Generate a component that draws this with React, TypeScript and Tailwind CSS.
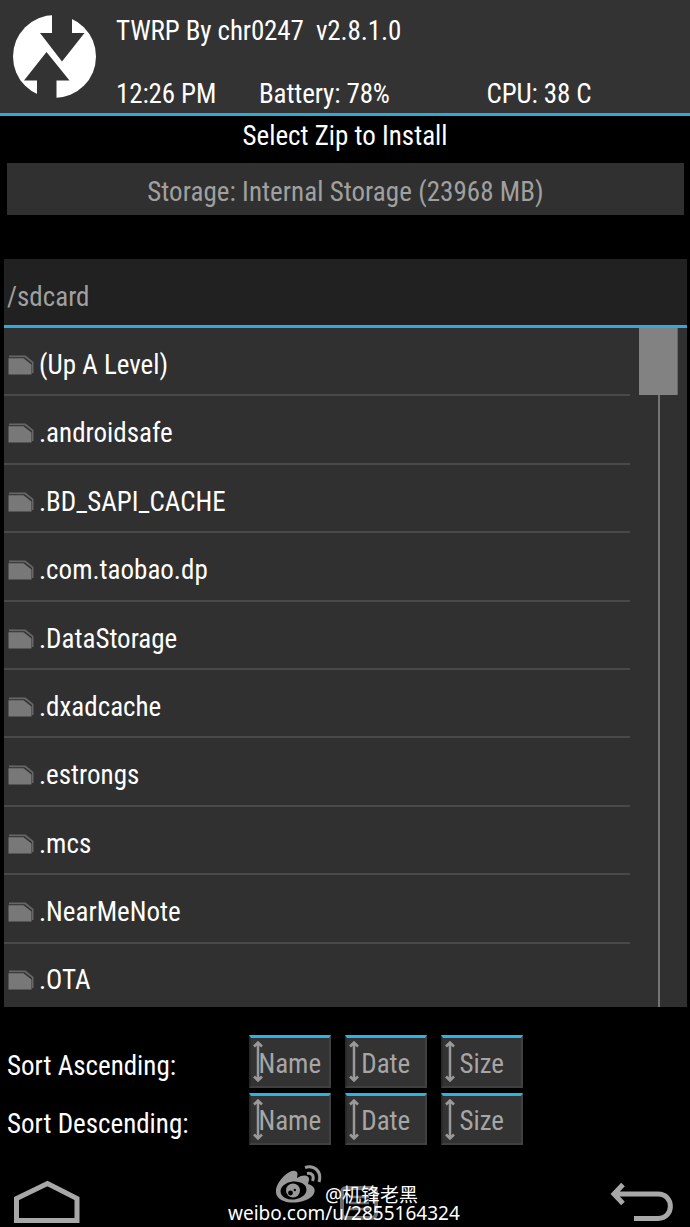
const FILES = [
  '(Up A Level)',
  '.androidsafe',
  '.BD_SAPI_CACHE',
  '.com.taobao.dp',
  '.DataStorage',
  '.dxadcache',
  '.estrongs',
  '.mcs',
  '.NearMeNote',
  '.OTA',
];

const SORT_KEYS = ['Name', 'Date', 'Size'];

function TwrpLogo() {
  return (
    <svg className="h-[84px] w-[84px]" viewBox="0 0 84 84">
      <circle cx="41.5" cy="41.5" r="41.5" fill="#fff" />
      <path d="M39 -1V18H27L49 46.500L71.500 18H59V-1Z" fill="#333" />
      <path d="M33.500 37L11 65.500H24V84H43.500V65.500H56.500Z" fill="#333" />
    </svg>
  );
}

function FolderIcon() {
  return (
    <svg className="h-5 w-[26px] shrink-0" viewBox="0 0 26 20">
      <path d="M1 2.300V0.500H17.500L25.500 7V18H24V8L16.500 2.300Z" fill="#666" />
      <path d="M0.500 3.200H15.500L23.500 9.500V19.500H0.500Z" fill="#787878" />
    </svg>
  );
}

function SortIcon() {
  return (
    <svg className="absolute top-[3px] left-[2px] h-[41px] w-[10px]" viewBox="0 0 10 41" fill="none" stroke="#999" strokeWidth="2.500">
      <path d="M5 2V39M1 5.500L5 1.500L9 5.500M1 35.500L5 39.500L9 35.500" />
    </svg>
  );
}

function SortRow({ label }: { label: string }) {
  return (
    <div className="flex h-[57.5px] items-start">
      <div className="w-[242px] pt-[15px]">{label}</div>
      <div className="flex gap-[14.5px]">
        {SORT_KEYS.map((key) => (
          <button
            key={key}
            className="relative h-[52.5px] w-[81.5px] border-2 border-t-[3px] border-[#404040] border-t-[#2fb2e3] border-l-[#292929] bg-[#333] pt-1 text-center text-[#a6a6a6]"
          >
            <SortIcon />
            <span className="relative">{key}</span>
          </button>
        ))}
      </div>
    </div>
  );
}

export default function App() {
  return (
    <div className="relative flex h-[1227px] w-[690px] flex-col overflow-hidden bg-black font-['Roboto_Condensed',Roboto,sans-serif] text-[27px] leading-8 whitespace-pre text-white">
      {/* Status header */}
      <header className="flex h-[116px] shrink-0 border-b-[3px] border-[#2fa9d6] bg-[#333] pt-[15px] pl-[13px]">
        <TwrpLogo />
        <div className="pl-[19px] tracking-[-0.12px]">
          <div>TWRP By chr0247  v2.8.1.0</div>
          <div className="flex pt-[31px]">
            <div className="w-[143px]">12:26 PM</div>
            <div className="w-[227.5px]">Battery: 78%</div>
            <div className="w-[140px]">CPU: 38 C</div>
          </div>
        </div>
      </header>

      <h1 className="mt-1 h-[43px] shrink-0 text-center">Select Zip to Install</h1>
      <button className="mr-1.5 ml-[7px] h-[52px] shrink-0 bg-[#303030] pt-1.5 text-center tracking-[0.05px] text-[#a0a0a0]">
        Storage: Internal Storage (23968 MB)
      </button>

      {/* File selector */}
      <section className="mt-11 mr-[3px] ml-1 flex h-[748px] shrink-0 flex-col bg-[#303030]">
        <div className="h-[69px] shrink-0 border-b-[3px] border-[#30a9dc] bg-[#212121] pt-[22px] pl-[3px] text-[#a0a0a0]">
          /sdcard
        </div>
        <div className="flex h-[679px] overflow-hidden">
          <ul className="w-[626px]">
            {FILES.map((name) => (
              <li key={name} className="flex h-[68.4px] items-center gap-[5px] border-b-2 border-[#494949] pt-[7.5px] pl-1">
                <FolderIcon />
                <span>{name}</span>
              </li>
            ))}
          </ul>
          <div className="ml-[9px] flex w-[39px] flex-col items-center">
            <div className="h-[67px] w-full shrink-0 border-r border-[#666] bg-[#828282]" />
            <div className="w-[2px] flex-1 bg-[#747474]" />
          </div>
        </div>
      </section>

      <div className="shrink-0 pt-7 pl-[7px]">
        <SortRow label="Sort Ascending:" />
        <SortRow label="Sort Descending:" />
      </div>

      {/* Navigation keys */}
      <nav className="flex flex-1 items-end pr-4 pb-1 pl-3.5">
        <svg className="h-[43px] w-[66px]" viewBox="0 0 66 43" fill="none" stroke="#a8a8a8" strokeWidth="5">
          <path d="M2.500 40.500V18.500L33.500 3.500L63 18.500V40.500Z" />
        </svg>
        <svg className="mb-[3px] ml-[260px] h-[34px] w-[38px]" viewBox="0 0 38 34" fill="none" stroke="#6c6c6c" strokeWidth="4">
          <rect x="2" y="2" width="34" height="30" rx="4" />
          <path d="M9 11H29M9 17H29M9 23H29" strokeWidth="2.500" />
        </svg>
        <svg className="ml-auto h-[42px] w-[64px]" viewBox="0 0 64 42" fill="none" stroke="#a8a8a8" strokeWidth="5">
          <path d="M5 13H48C64.500 13 64.500 37.500 48 37.500H24M13 3.500L4 13L13 22.500" />
        </svg>
      </nav>

      {/* Watermark */}
      <div className="absolute top-[1164px] left-[228px] w-[240px] font-['Noto_Sans','Noto_Sans_CJK_SC',sans-serif]">
        <svg className="absolute top-0 left-12 h-[40px] w-[46px]" viewBox="0 0 46 40">
          <path d="M0 27C0 18 13 5 19 7C23 8 21 12 21 14C27 10 34 11 33 16L32 20C43 23 39 33 30 36C15 42 -1 37 0 27Z" fill="#999" />
          <ellipse cx="17.500" cy="26.500" rx="13" ry="9" fill="#000" transform="rotate(-7 17.500 26.500)" />
          <circle cx="17" cy="26.500" r="7" fill="#999" />
          <circle cx="14.500" cy="29" r="2.400" fill="#000" />
          <circle cx="18.800" cy="26" r="1.200" fill="#000" />
          <path d="M31 9.500C36 8.500 38.500 12 36.500 17M29 3.500C39 0.500 46 8 43 18" fill="none" stroke="#999" strokeWidth="3" />
        </svg>
        <div className="pt-[22px] pl-[97px] text-[19px] leading-[18px]">@机锋老黑</div>
        <div className="text-[19px] leading-[18px]">weibo.com/u/2855164324</div>
      </div>
    </div>
  );
}
